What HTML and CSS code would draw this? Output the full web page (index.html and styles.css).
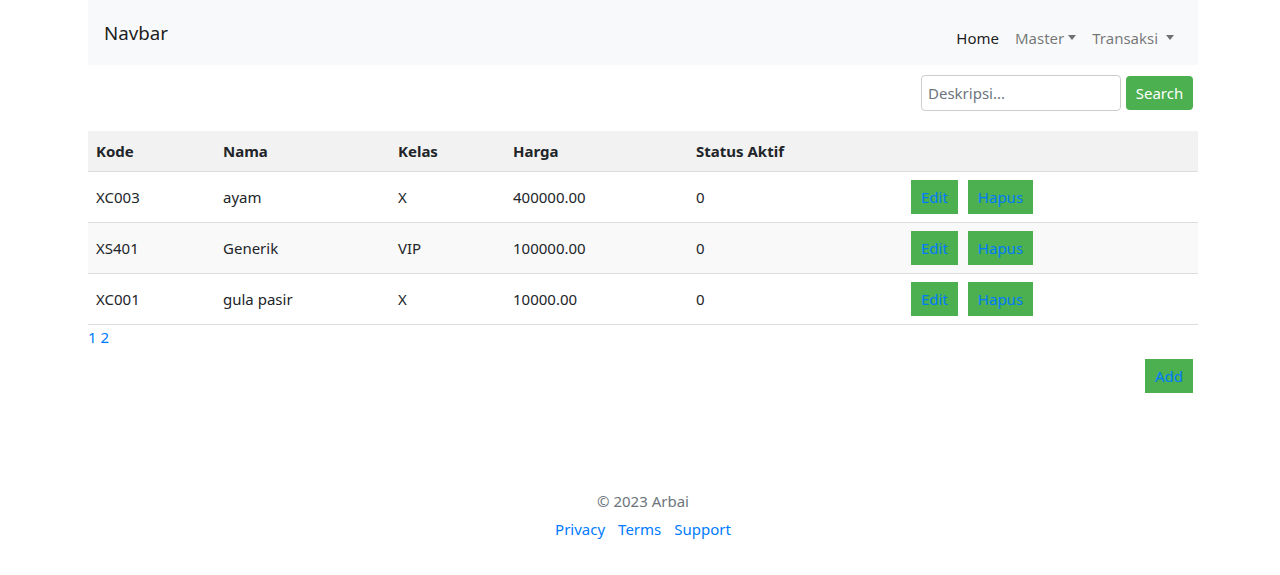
FILE: index.html
```html
<!DOCTYPE html>
<html lang="id">
<head>
<meta charset="utf-8">
<title>Navbar</title>
<link rel="stylesheet" href="styles.css">
</head>
<body>
<div class="container">
  <nav class="navbar">
    <a class="brand" href="#">Navbar</a>
    <ul class="nav">
      <li><a class="nav-link active" href="#">Home</a></li>
      <li><a class="nav-link dropdown" href="#">Master</a></li>
      <li><a class="nav-link dropdown spaced" href="#">Transaksi </a></li>
    </ul>
  </nav>

  <form class="search">
    <input class="search-input" type="text" placeholder="Deskripsi...">
    <button class="btn-search" type="button">Search</button>
  </form>

  <table class="data">
    <thead>
      <tr>
        <th class="c1">Kode</th>
        <th class="c2">Nama</th>
        <th class="c3">Kelas</th>
        <th class="c4">Harga</th>
        <th class="c5">Status Aktif</th>
        <th class="c6"></th>
      </tr>
    </thead>
    <tbody>
      <tr>
        <td>XC003</td><td>ayam</td><td>X</td><td>400000.00</td><td>0</td>
        <td><div class="actions"><button class="btn-green"><a href="#">Edit</a></button><button class="btn-green"><a href="#">Hapus</a></button></div></td>
      </tr>
      <tr>
        <td>XS401</td><td>Generik</td><td>VIP</td><td>100000.00</td><td>0</td>
        <td><div class="actions"><button class="btn-green"><a href="#">Edit</a></button><button class="btn-green"><a href="#">Hapus</a></button></div></td>
      </tr>
      <tr>
        <td>XC001</td><td>gula pasir</td><td>X</td><td>10000.00</td><td>0</td>
        <td><div class="actions"><button class="btn-green"><a href="#">Edit</a></button><button class="btn-green"><a href="#">Hapus</a></button></div></td>
      </tr>
    </tbody>
  </table>

  <div class="pages"><a href="#">1</a> <a href="#">2</a></div>

  <div class="add-row"><button class="btn-green"><a href="#">Add</a></button></div>

  <footer class="footer">
    <p class="copy">© 2023 Arbai</p>
    <ul class="links">
      <li><a href="#">Privacy</a></li>
      <li><a href="#">Terms</a></li>
      <li><a href="#">Support</a></li>
    </ul>
  </footer>
</div>
</body>
</html>
```

FILE: styles.css
```css
* { box-sizing: border-box; }
body {
  margin: 0;
  font-family: "Noto Sans", "Open Sans", sans-serif;
  font-size: 15px;
  line-height: 24px;
  color: #212529;
  background: #fff;
}
a { color: #007bff; text-decoration: none; }
.container {
  width: 1110px;
  margin: 0 0 0 88px;
}
.navbar {
  height: 65px;
  background: #f8f9fa;
  display: flex;
  justify-content: space-between;
  align-items: flex-start;
  padding: 0 16px;
}
.brand {
  margin-top: 18px;
  font-size: 18.75px;
  line-height: 30px;
  color: rgba(0,0,0,.9);
}
.nav {
  list-style: none;
  margin: 26px 0 0;
  padding: 0;
  display: flex;
}
.nav-link {
  display: block;
  padding: 0 8px;
  color: rgba(0,0,0,.55);
}
.nav-link.active { color: rgba(0,0,0,.9); }
.dropdown::after {
  content: "";
  display: inline-block;
  margin-left: 4px;
  vertical-align: 4px;
  border-top: 5px solid;
  border-left: 4px solid transparent;
  border-right: 4px solid transparent;
}
.dropdown.spaced::after { margin-left: 4px; }
.search {
  display: flex;
  justify-content: flex-end;
  align-items: center;
  margin: 10px 5px 0 0;
  gap: 5px;
}
.search-input {
  width: 200px;
  height: 36px;
  border: 1px solid #ccc;
  border-radius: 4px;
  padding: 0 6px;
  font: inherit;
  color: #495057;
}
.search-input::placeholder { color: #6c757d; }
.btn-search {
  height: 34px;
  width: 67px;
  padding: 0;
  border: 0;
  border-radius: 4px;
  background: #4caf50;
  color: #fff;
  font: inherit;
}
.data {
  width: 100%;
  border-collapse: collapse;
  margin-top: 20px;
}
.data th, .data td {
  text-align: left;
  padding: 8px;
  border-bottom: 1px solid #ddd;
  vertical-align: middle;
}
.data th { background: #f2f2f2; font-weight: 700; }
.data tbody tr:nth-child(even) { background: #f9f9f9; }
.c1 { width: 127px; }
.c2 { width: 175px; }
.c3 { width: 115px; }
.c4 { width: 183px; }
.c5 { width: 215px; }
.actions { display: flex; gap: 10px; }
.btn-green {
  height: 34px;
  padding: 0 10px;
  border: 0;
  background: #4caf50;
  font: inherit;
}
.pages { line-height: 24px; }
.add-row {
  display: flex;
  justify-content: flex-end;
  margin: 10px 5px 0 0;
}
.footer {
  margin-top: 96px;
  text-align: center;
}
.copy {
  margin: 0 0 4px;
  color: #6c757d;
}
.links {
  list-style: none;
  margin: 0;
  padding: 0;
  display: flex;
  justify-content: center;
  gap: 13px;
}
```
